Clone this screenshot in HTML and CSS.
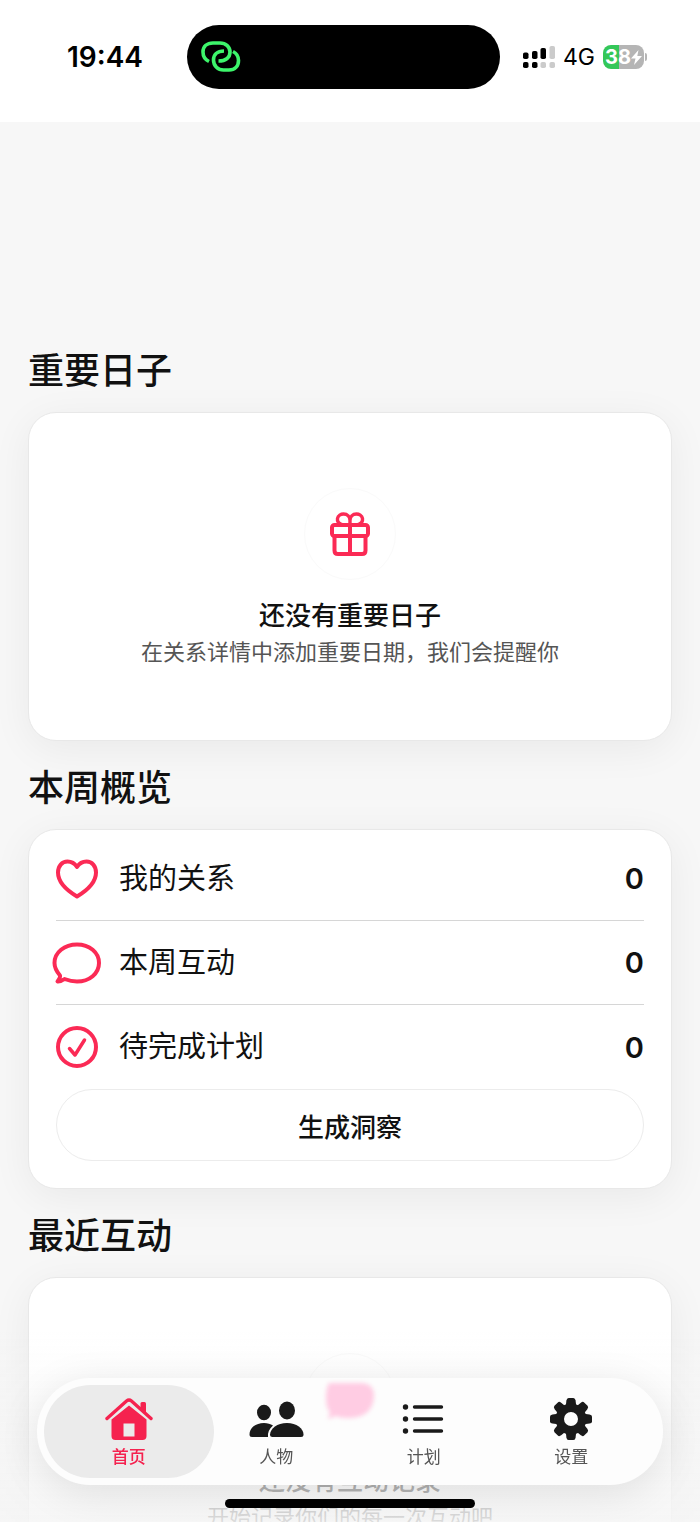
FILE: index.html
```html
<!DOCTYPE html>
<html lang="zh-CN">
<head>
    <meta charset="UTF-8">
    <meta name="viewport" content="width=device-width, initial-scale=1.0">
    <title>首页</title>
    <link rel="stylesheet" href="styles.css">
</head>
<body>
    <header class="status-bar">
        <div class="time">19:44</div>
        <div class="island">
            <svg width="42" height="34" viewBox="200 40 42 34" fill="none" stroke="#3df56b" stroke-width="3.6">
                <path d="M209 61.5C205 59.5 203 56 203 52C203 46.5 207 43 213 43H220C226 43 230 47 230 52C230 57.5 226 61 218.5 61"/>
                <path d="M224 51C217 51 213.5 55 213.5 60C213.5 66 218 70 223.5 70H229C235 70 238.5 66 238.5 60.5C238.5 56.5 237 53.5 233 51.5"/>
            </svg>
        </div>
        <div class="indicators">
            <svg width="32" height="24" viewBox="0 0 32 24">
                <g fill="#000">
                    <rect x="0" y="7.5" width="5.5" height="6.5" rx="1.8"/>
                    <rect x="9" y="6" width="5.5" height="8" rx="1.8"/>
                    <rect x="17.5" y="3" width="5.5" height="11" rx="1.8"/>
                    <rect x="0" y="17" width="5.5" height="6" rx="1.8"/>
                    <rect x="9" y="17" width="5.5" height="6" rx="1.8"/>
                </g>
                <g fill="#cbcbcb">
                    <rect x="26.5" y="1" width="5.5" height="13" rx="1.8"/>
                    <rect x="17.5" y="17" width="5.5" height="6" rx="1.8"/>
                    <rect x="26.5" y="17" width="5.5" height="6" rx="1.8"/>
                </g>
            </svg>
            <span class="network">4G</span>
            <span class="battery">
                <span class="battery-level">38<svg width="11" height="15" viewBox="0 0 11 15"><path d="M7.5 0L0 8.5H4.5L3 15L11 6H6.3Z" fill="#fff"/></svg></span>
                <span class="battery-cap"></span>
            </span>
        </div>
    </header>

    <main class="content">
        <section>
            <h2>重要日子</h2>
            <div class="card empty">
                <div class="empty-icon">
                    <svg width="42" height="46" viewBox="0 0 42 46" fill="none" stroke="#fb2a55" stroke-width="4" stroke-linejoin="round">
                        <rect x="3" y="14" width="36" height="11" rx="2.5"/>
                        <path d="M5.5 25V39.5Q5.5 43 9 43H33Q36.5 43 36.5 39.5V25M21 14V43"/>
                        <path d="M21 14H14C10 13 8 10.5 8.5 7.5C9 4.5 12 3 14.5 3C18.5 3 21 6 21 9.5ZM21 14H28C32 13 34 10.500 33.5 7.5C33 4.5 30 3 27.5 3C23.5 3 21 6 21 9.5Z" stroke-width="3.4"/>
                    </svg>
                </div>
                <h3>还没有重要日子</h3>
                <p>在关系详情中添加重要日期，我们会提醒你</p>
            </div>
        </section>

        <section>
            <h2>本周概览</h2>
            <div class="card overview">
                <ul class="stats">
                    <li>
                        <span class="stat-icon">
                            <svg width="50" height="44" viewBox="0 0 50 44" fill="none" stroke="#fb2a55" stroke-width="4" stroke-linejoin="round">
                                <path d="M25 10C22.5 6 19 4.5 15.5 4.5C10 4.5 6 9 6 15.5C6 25.5 15 33.5 25 39.5C35 33.5 44 25.5 44 15.5C44 9 40 4.5 34.5 4.5C31 4.5 27.5 6 25 10Z"/>
                            </svg>
                        </span>
                        <span class="stat-name">我的关系</span>
                        <strong>0</strong>
                    </li>
                    <li>
                        <span class="stat-icon">
                            <svg width="50" height="44" viewBox="0 0 50 44" fill="none" stroke="#fb2a55" stroke-width="4" stroke-linejoin="round">
                                <path d="M25 3.5C12.5 3.5 2.5 11.5 2.5 22C2.5 27 5 31 8 34.5C8.5 36.5 7 38.5 5.5 40.5C8 40.7 10.5 39.5 12.5 38C16.5 39.5 20.5 40.5 25 40.5C37.5 40.5 47 32.5 47 22C47 11.5 37.5 3.5 25 3.5Z"/>
                            </svg>
                        </span>
                        <span class="stat-name">本周互动</span>
                        <strong>0</strong>
                    </li>
                    <li>
                        <span class="stat-icon">
                            <svg width="50" height="44" viewBox="0 0 50 44" fill="none" stroke="#fb2a55" stroke-width="4" stroke-linecap="round" stroke-linejoin="round">
                                <circle cx="25" cy="22" r="19"/>
                                <path d="M17.5 23.5L23 30L32.5 15" stroke-width="3.5"/>
                            </svg>
                        </span>
                        <span class="stat-name">待完成计划</span>
                        <strong>0</strong>
                    </li>
                </ul>
                <button class="insight-btn" type="button">生成洞察</button>
            </div>
        </section>

        <section>
            <h2>最近互动</h2>
            <div class="card empty">
                <div class="empty-icon"></div>
                <h3>还没有互动记录</h3>
                <p>开始记录你们的每一次互动吧</p>
            </div>
        </section>
    </main>

    <div class="bottom-fade"></div>

    <nav class="tab-bar">
        <svg class="bubble-glow" width="48" height="38" viewBox="0 0 48 38" fill="#ffcce3">
            <path d="M3 1H36Q48 2 48 14Q47 35 24 36Q14 36 10 34L2 37L4 30Q0 26 0 16Q0 6 3 1Z"/>
        </svg>
        <a class="tab active" href="#home">
            <svg width="56" height="44" viewBox="0 0 56 44" fill="#f5224f">
                <path d="M39.5 6.5Q39.5 5 41 5H43.5Q45 5 45 6.5V17L39.5 12Z"/>
                <path d="M6 21.5L25.5 4Q28 2 30.5 4L50 21.5" fill="none" stroke="#f5224f" stroke-width="3.4" stroke-linecap="round"/>
                <path fill-rule="evenodd" d="M10.5 22.5L28 8.5L45.5 22.5V39Q45.5 43 41.5 43H14.5Q10.5 43 10.5 39ZM22.5 26.5V39.5H33.5V26.5Z"/>
            </svg>
            <span>首页</span>
        </a>
        <a class="tab" href="#people">
            <svg width="56" height="44" viewBox="0 0 56 44" fill="#1a1a1a">
                <ellipse cx="16" cy="15.5" rx="7" ry="7.8"/>
                <ellipse cx="39" cy="13.5" rx="8" ry="9"/>
                <path d="M25 28.5C21 32 19.500 36 20 40H4Q1.500 40 1.500 37.5C1.500 31 7.500 26 16 26C19.500 26 22.500 27 25 28.5Z"/>
                <path d="M24.5 40Q22 40 22 37.5C22.5 31.5 29 26 39 26C48.5 26 55.500 31.5 55.500 37.5Q55.500 40 53 40Z"/>
            </svg>
            <span>人物</span>
        </a>
        <a class="tab" href="#plans">
            <svg width="56" height="44" viewBox="0 0 56 44" fill="#1a1a1a">
                <circle cx="9.5" cy="10" r="2.7"/>
                <circle cx="9.5" cy="22" r="2.7"/>
                <circle cx="9.5" cy="34" r="2.7"/>
                <path d="M18.5 10H45.5M18.5 22H45.5M18.5 34H45.5" stroke="#1a1a1a" stroke-width="3.4" stroke-linecap="round"/>
            </svg>
            <span>计划</span>
        </a>
        <a class="tab" href="#settings">
            <svg width="56" height="44" viewBox="-28 -22 56 44">
                <defs>
                    <path id="tooth" d="M-5.2 -13L-4.6 -18.5Q-4.2 -21 -2.400 -21H2.4Q4.2 -21 4.6 -18.5L5.2 -13Z"/>
                </defs>
                <g fill="#1a1a1a">
                    <use href="#tooth"/>
                    <use href="#tooth" transform="rotate(45)"/>
                    <use href="#tooth" transform="rotate(90)"/>
                    <use href="#tooth" transform="rotate(135)"/>
                    <use href="#tooth" transform="rotate(180)"/>
                    <use href="#tooth" transform="rotate(225)"/>
                    <use href="#tooth" transform="rotate(270)"/>
                    <use href="#tooth" transform="rotate(315)"/>
                </g>
                <circle r="11.2" fill="none" stroke="#1a1a1a" stroke-width="8.4"/>
            </svg>
            <span>设置</span>
        </a>
    </nav>
    <div class="home-indicator"></div>
</body>
</html>
```
FILE: styles.css
```css
* {
    margin: 0;
    padding: 0;
    box-sizing: border-box;
}

body {
    display: flex;
    flex-direction: column;
    height: 100vh;
    overflow: hidden;
    background-color: #f7f7f7;
    color: #111;
    font-family: Inter, "Noto Sans CJK SC", sans-serif;
}

svg {
    display: block;
    flex-shrink: 0;
}

/* status bar */
.status-bar {
    display: grid;
    grid-template-columns: 1fr 313px 1fr;
    flex-shrink: 0;
    align-items: center;
    padding: 25px 13px 33px 0;
    background-color: #fff;
    color: #000;
}

.time {
    padding-left: 67px;
    font-size: 28px;
    font-weight: 600;
}

.island {
    display: flex;
    align-items: center;
    height: 64px;
    padding-left: 13px;
    border-radius: 32px;
    background-color: #000;
}

.indicators {
    display: flex;
    align-items: center;
    gap: 8px;
    padding-left: 23px;
}

.network {
    font-size: 23px;
}

.battery {
    display: flex;
    align-items: center;
    gap: 1px;
}

.battery-level {
    display: flex;
    align-items: center;
    justify-content: center;
    width: 41px;
    height: 24px;
    border-radius: 8px;
    background: linear-gradient(to right, #34c759 38%, #b5b5b5 38%);
    color: #fff;
    font-size: 20px;
    font-weight: 700;
}

.battery-cap {
    width: 2px;
    height: 8px;
    border-radius: 0 4px 4px 0;
    background-color: #b5b5b5;
}

/* page content */
.content {
    flex: 1;
    overflow-y: auto;
    scrollbar-width: none;
    padding: 202px 28px 160px;
}

h2 {
    padding: 25px 0 19px;
    font-size: 36px;
    font-weight: 500;
    line-height: 44px;
}

.card {
    border: 1px solid #e8e8e8;
    border-radius: 28px;
    background-color: #fff;
    box-shadow: 0 8px 40px rgba(0, 0, 0, 0.06);
}

.empty {
    display: flex;
    flex-direction: column;
    align-items: center;
    padding: 75px 28px 70px;
    text-align: center;
}

.empty-icon {
    display: flex;
    align-items: center;
    justify-content: center;
    width: 92px;
    height: 92px;
    margin-bottom: 18px;
    border: 1px solid #fafafa;
    border-radius: 50%;
}

.empty h3 {
    font-size: 26px;
    font-weight: 500;
    line-height: 36px;
}

.empty p {
    color: #555;
    font-size: 22px;
    line-height: 36px;
}

.overview {
    padding: 7px 27px 27px;
}

.stats {
    list-style: none;
}

.stats li {
    display: flex;
    align-items: center;
    gap: 21px;
    height: 84px;
    border-bottom: 1px solid #d6d6d6;
}

.stats li:last-child {
    border-bottom: none;
}

.stat-icon {
    display: flex;
    justify-content: center;
    width: 42px;
}

.stat-name {
    flex: 1;
    font-size: 29px;
    line-height: 40px;
}

.stats strong {
    font-size: 29px;
    font-weight: 600;
}

.insight-btn {
    display: block;
    width: 100%;
    height: 72px;
    border: 1px solid #ececec;
    border-radius: 36px;
    background-color: #fff;
    color: #111;
    font-family: inherit;
    font-size: 26px;
    font-weight: 500;
}

/* floating tab bar */
.bottom-fade {
    position: fixed;
    right: 0;
    bottom: 0;
    left: 0;
    height: 190px;
    background: linear-gradient(to bottom, rgba(247, 247, 247, 0), rgba(245, 245, 245, 0.85));
    pointer-events: none;
}

.tab-bar {
    position: fixed;
    right: 37px;
    bottom: 37px;
    left: 37px;
    display: grid;
    grid-template-columns: repeat(4, 1fr);
    height: 107px;
    padding: 7px 18px;
    border-radius: 54px;
    background-color: #fdfdfd;
    box-shadow: 0 8px 40px rgba(0, 0, 0, 0.1);
}

.tab {
    display: flex;
    flex-direction: column;
    align-items: center;
    gap: 4px;
    padding-top: 12px;
    border-radius: 47px;
    color: #555;
    font-size: 17px;
    line-height: 24px;
    text-decoration: none;
}

.tab.active {
    margin: 0 -11px;
    background-color: #ebebeb;
    color: #f5224f;
    font-weight: 500;
}

.bubble-glow {
    position: absolute;
    top: 4px;
    left: 50%;
    margin-left: -24px;
    overflow: visible;
    filter: blur(2px);
}

.home-indicator {
    position: fixed;
    bottom: 14px;
    left: 50%;
    width: 250px;
    height: 9px;
    margin-left: -125px;
    border-radius: 5px;
    background-color: #000;
}
```
